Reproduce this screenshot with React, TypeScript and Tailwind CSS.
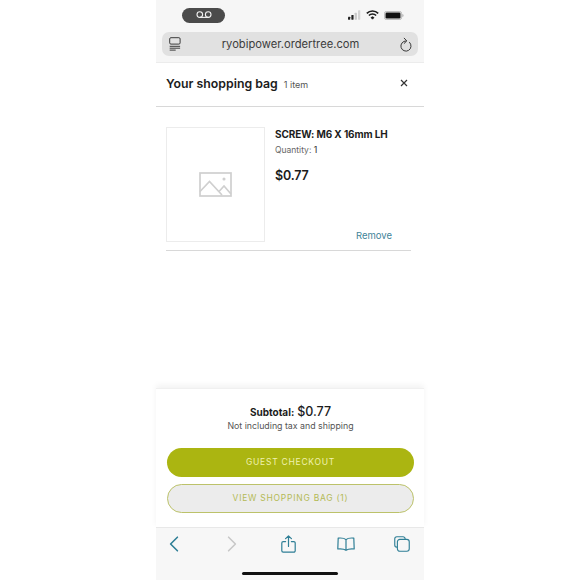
import React from "react";

const ICON = "#2f7f96";

function Voicemail() {
  return (
    <svg width="16" height="8" viewBox="0 0 16 8" fill="none" stroke="#f2f2f2" strokeWidth="1.1">
      <circle cx="3.8" cy="3.6" r="2.8" />
      <circle cx="12.2" cy="3.6" r="2.8" />
      <path d="M3.8 6.4h8.4" />
    </svg>
  );
}

function StatusIcons() {
  return (
    <div className="flex items-center gap-[5px]">
      <svg width="13" height="10" viewBox="0 0 14 10">
        <rect x="0" y="7" width="2.4" height="3" rx="0.5" fill="#222" />
        <rect x="3.6" y="5" width="2.4" height="5" rx="0.5" fill="#222" />
        <rect x="7.2" y="2.5" width="2.4" height="7.5" rx="0.5" fill="#c9c9c9" />
        <rect x="10.8" y="0" width="2.4" height="10" rx="0.5" fill="#d4d4d4" />
      </svg>
      <svg width="13" height="10" viewBox="0 0 13 10" fill="none" stroke="#1b1b1b" strokeWidth="1.6">
        <path d="M0.8 3.4a8 8 0 0 1 11.4 0" />
        <path d="M2.9 5.5a5 5 0 0 1 7.2 0" />
        <path d="M5 7.6a2.1 2.1 0 0 1 3 0L6.5 9.2z" fill="#1b1b1b" strokeWidth="0.8" />
      </svg>
      <svg width="20" height="9" viewBox="0 0 20 9">
        <rect x="0.4" y="0.4" width="17.2" height="8.2" rx="2.2" fill="none" stroke="#a8a8a8" strokeWidth="0.8" />
        <rect x="1.5" y="1.5" width="15" height="6" rx="1.2" fill="#111" />
        <path d="M18.4 3v3c.7-.2 1.1-.8 1.1-1.5s-.4-1.3-1.1-1.5z" fill="#a8a8a8" />
      </svg>
    </div>
  );
}

function ReaderIcon() {
  return (
    <svg width="12" height="14" viewBox="0 0 12 14" fill="none" stroke="#3a3a3a" strokeWidth="1">
      <rect x="0.7" y="0.7" width="10.4" height="6.4" rx="1.2" />
      <path d="M0.7 9.3h10.4M0.7 11.2h10.4M0.7 13.1h6" />
    </svg>
  );
}

function ReloadIcon() {
  return (
    <svg width="12" height="15" viewBox="0 0 12 15" fill="none" stroke="#3a3a3a" strokeWidth="1" strokeLinecap="round" strokeLinejoin="round">
      <path d="M9.6 5.4A5.1 5.1 0 1 1 6 3.9" />
      <path d="M4.2 1.2 6.8 3.9 4.2 6.4" />
    </svg>
  );
}

function PlaceholderIcon() {
  return (
    <svg width="33" height="25" viewBox="0 0 33 25" fill="none" stroke="#cfcfcf" strokeWidth="1.7">
      <rect x="1" y="1" width="31" height="23" />
      <path d="M1 19.5 10.5 9.5 23 23" />
      <path d="M20 19.5 25 14l7 8" />
      <circle cx="25" cy="7" r="0.7" fill="#cfcfcf" />
    </svg>
  );
}

function ToolbarIcons() {
  return (
    <div className="flex items-center w-full pl-[13px]">
      <svg width="10" height="16" viewBox="0 0 10 16" fill="none" stroke={ICON} strokeWidth="1.6" strokeLinecap="round" strokeLinejoin="round">
        <path d="M8.4 1.2 1.6 8l6.8 6.8" />
      </svg>
      <svg width="10" height="16" viewBox="0 0 10 16" fill="none" stroke="#c8c8c8" strokeWidth="1.6" strokeLinecap="round" strokeLinejoin="round" className="ml-[48px]">
        <path d="M1.6 1.2 8.4 8l-6.8 6.8" />
      </svg>
      <svg width="15" height="18" viewBox="0 0 15 18" fill="none" stroke={ICON} strokeWidth="1.2" strokeLinecap="round" strokeLinejoin="round" className="ml-[44px]">
        <path d="M4.6 6.6H2.2A1.4 1.4 0 0 0 .8 8v7.8a1.4 1.4 0 0 0 1.4 1.4h10.6a1.4 1.4 0 0 0 1.4-1.4V8a1.4 1.4 0 0 0-1.4-1.4h-2.4" />
        <path d="M7.5 11.5V1M4.6 3.7 7.5.8l2.9 2.9" />
      </svg>
      <svg width="18" height="14" viewBox="0 0 18 14" fill="none" stroke={ICON} strokeWidth="1.2" strokeLinejoin="round" className="ml-[41px]">
        <path d="M9 2.6C7.6 1.2 5 .8 1.2 1.1L.8 12c3.6-.3 6.4 0 8.2 1.3 1.8-1.3 4.6-1.6 8.2-1.3l-.4-10.9C13 .8 10.4 1.2 9 2.6zM9 2.6v10.7" />
      </svg>
      <svg width="16" height="16" viewBox="0 0 17 17" fill="none" stroke={ICON} strokeWidth="1.2" className="ml-[39px]">
        <path d="M11.8 3.5V3A2.2 2.2 0 0 0 9.6.8H3A2.2 2.2 0 0 0 .8 3v6.6A2.2 2.2 0 0 0 3 11.8h.5" />
        <rect x="3.6" y="3.6" width="12.6" height="12.6" rx="2.6" />
      </svg>
    </div>
  );
}

export default function App() {
  return (
    <div className="w-[580px] h-[580px] bg-white flex justify-center overflow-hidden font-['Inter','Liberation_Sans',sans-serif]">
      <div className="w-[268px] h-[580px] flex flex-col">
        <div className="bg-[#f6f6f6] h-[63px] flex flex-col border-b border-[#ececec] shrink-0">
          <div className="h-[32px] flex items-center justify-between pl-[26px] pr-[20px] pb-[2px] shrink-0">
            <div className="w-[43px] h-[15px] rounded-full bg-[#4b4b4b] flex items-center justify-center">
              <Voicemail />
            </div>
            <StatusIcons />
          </div>
          <div className="mx-[6px] h-[24px] rounded-[7px] bg-[#e1e1e1] flex items-center justify-between pl-[7px] pr-[6px]">
            <ReaderIcon />
            <span className="text-[11.2px] text-[#3c3c3c]">ryobipower.ordertree.com</span>
            <ReloadIcon />
          </div>
        </div>

        <div className="h-[44px] border-b border-[#d8d8d8] flex items-center justify-between pl-[10px] pr-[16px] shrink-0">
          <div className="flex items-baseline gap-[6px]">
            <span className="text-[12.3px] font-semibold text-[#1c1c1c]">Your shopping bag</span>
            <span className="text-[9px] text-[#555]">1 item</span>
          </div>
          <svg width="8" height="8" viewBox="0 0 8 8" stroke="#333" strokeWidth="1.2" className="mb-[3px]">
            <path d="M1 1l6 6M7 1 1 7" />
          </svg>
        </div>

        <div className="flex-1 pl-[10px] pr-[13px] pt-[20px]">
          <div className="flex gap-[10px] border-b border-[#d8d8d8] h-[124px] pb-[8px]">
            <div className="w-[99px] h-[115px] border border-[#ececec] flex items-center justify-center shrink-0">
              <PlaceholderIcon />
            </div>
            <div className="flex-1 flex flex-col">
              <span className="text-[10px] leading-[12px] font-bold text-[#1c1c1c] mt-[1px] whitespace-nowrap tracking-[-0.1px]">SCREW: M6 X 16mm LH</span>
              <span className="text-[8.5px] leading-[12px] text-[#666] mt-[4px]">
                Quantity: <span className="text-[#444] font-medium">1</span>
              </span>
              <span className="text-[12.5px] leading-[14px] font-semibold text-[#1c1c1c] mt-[13px] tracking-[-0.2px]">$0.77</span>
              <span className="mt-auto self-end mr-[19px] text-[9.5px] leading-[12px] text-[#3f8499] whitespace-nowrap">Remove</span>
            </div>
          </div>
        </div>

        <div className="h-[140px] border-t border-[#f0f0f0] shadow-[0_-3px_6px_rgba(0,0,0,0.05)] flex flex-col items-center shrink-0 pl-[11px] pr-[10px] border-b border-b-[#e8e8e8]">
          <div className="mt-[15px] flex items-baseline gap-[3px] text-[#1c1c1c] leading-[16px]">
            <span className="text-[10px] font-bold">Subtotal:</span>
            <span className="text-[12.5px] font-medium">$0.77</span>
          </div>
          <span className="text-[8.8px] leading-[12px] text-[#555]">Not including tax and shipping</span>
          <div className="w-full h-[29px] rounded-full bg-[#abb511] flex items-center justify-center mt-[16px] text-[8.5px] tracking-[0.75px] text-[#f0f2b0]">
            GUEST CHECKOUT
          </div>
          <div className="w-full h-[29px] rounded-full bg-[#ececec] border border-[#bcc26a] flex items-center justify-center mt-[7px] text-[8.5px] tracking-[0.75px] text-[#b4ba55]">
            VIEW SHOPPING BAG (1)
          </div>
        </div>

        <div className="h-[52px] bg-[#f7f7f7] flex flex-col items-center shrink-0 pt-[7px]">
          <div className="h-[18px] w-full flex items-center">
            <ToolbarIcons />
          </div>
          <div className="w-[96px] h-[3px] rounded-full bg-[#111] mt-[19px]" />
        </div>
      </div>
    </div>
  );
}
